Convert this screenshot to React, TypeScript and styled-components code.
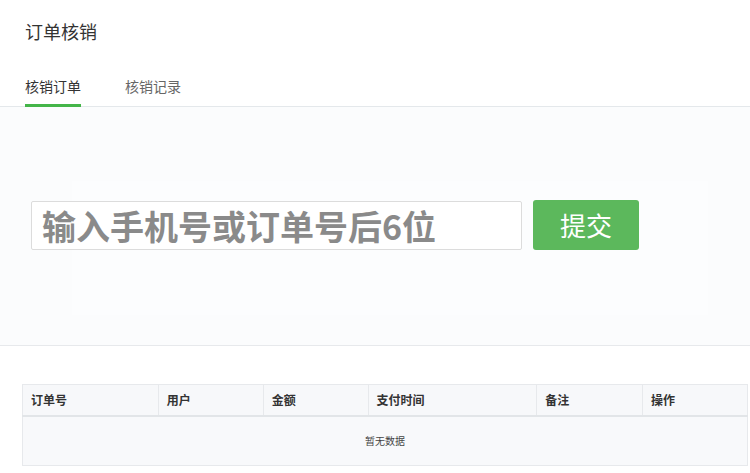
import React from "react";
import styled, { createGlobalStyle } from "styled-components";

const Global = createGlobalStyle`
  html, body { margin: 0; padding: 0; background: #fff; }
  body { font-family: "Liberation Sans", "Noto Sans CJK SC", sans-serif; color: #333; }
  * { box-sizing: border-box; }
`;

const Page = styled.div`
  width: 750px;
  height: 473px;
  overflow: hidden;
  background: #fff;
`;

const Title = styled.h2`
  margin: 0;
  padding: 20px 0 0 25px;
  height: 60px;
  font-size: 18px;
  font-weight: normal;
  line-height: 26px;
  color: #333;
`;

const TabBar = styled.div`
  display: flex;
  gap: 44px;
  padding-left: 25px;
  border-bottom: 1px solid #e4e8eb;
  height: 47px;
`;

const Tab = styled.div<{ $active?: boolean }>`
  font-size: 14px;
  line-height: 20px;
  padding-top: 17px;
  color: ${(p) => (p.$active ? "#333" : "#666")};
  border-bottom: 3px solid ${(p) => (p.$active ? "#44b549" : "transparent")};
  margin-bottom: -1px;
`;

const Panel = styled.div`
  height: 239px;
  background: #fbfcfd;
  border-bottom: 1px solid #e7e9ec;
  padding-top: 74px;
  padding-left: 72px;
`;

const Inner = styled.div`
  width: 636px;
  height: 134px;
  background: #fcfdfe;
  padding-top: 20px;
`;

const Form = styled.div`
  display: flex;
  align-items: center;
  gap: 11px;
  margin-left: -41px;
`;

const Input = styled.input`
  width: 491px;
  height: 49px;
  border: 1px solid #dcdcdc;
  border-radius: 2px;
  background: #fff;
  padding: 0 10px;
  font-family: "Noto Sans CJK SC", sans-serif;
  font-size: 34px;
  font-weight: bold;
  color: #333;
  outline: none;
  &::placeholder { color: #8a8a8a; }
`;

const Button = styled.button`
  width: 106px;
  height: 50px;
  margin-top: -1px;
  border: none;
  border-radius: 3px;
  background: #5cb85c;
  color: #fff;
  font-family: "Noto Sans CJK SC", sans-serif;
  font-size: 26px;
  line-height: 1;
  padding: 0;
  cursor: pointer;
`;

const TableWrap = styled.div`
  padding: 38px 2px 0 22px;
`;

const Table = styled.table`
  width: 726px;
  border-collapse: collapse;
  border: 1px solid #e7e9ec;
  font-size: 12px;
`;

const Th = styled.th<{ $w: number }>`
  width: ${(p) => p.$w}px;
  height: 31px;
  text-align: left;
  padding: 0 8px;
  background: #f7f8fa;
  font-weight: bold;
  color: #333;
  border-right: 1px solid #e7e9ec;
  border-bottom: 2px solid #e2e5e8;
  &:last-child { border-right: none; }
`;

const Empty = styled.td`
  height: 50px;
  text-align: center;
  background: #f8f9fb;
  color: #444;
  font-size: 10px;
`;

const cols: [string, number][] = [
  ["订单号", 136],
  ["用户", 105],
  ["金额", 105],
  ["支付时间", 169],
  ["备注", 106],
  ["操作", 105],
];

export default function App() {
  return (
    <Page>
      <Global />
      <Title>订单核销</Title>
      <TabBar>
        <Tab $active>核销订单</Tab>
        <Tab>核销记录</Tab>
      </TabBar>
      <Panel>
        <Inner>
          <Form>
            <Input placeholder="输入手机号或订单号后6位" />
            <Button>提交</Button>
          </Form>
        </Inner>
      </Panel>
      <TableWrap>
        <Table>
          <thead>
            <tr>
              {cols.map(([t, w]) => (
                <Th key={t} $w={w}>{t}</Th>
              ))}
            </tr>
          </thead>
          <tbody>
            <tr>
              <Empty colSpan={6}>暂无数据</Empty>
            </tr>
          </tbody>
        </Table>
      </TableWrap>
    </Page>
  );
}
